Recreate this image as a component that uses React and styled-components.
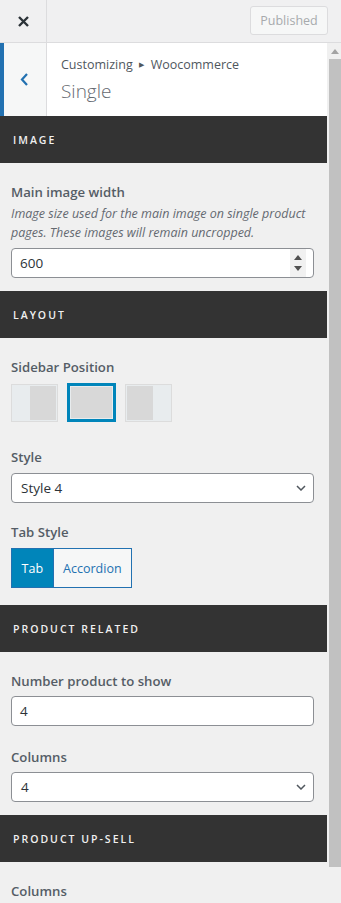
import React from "react";
import styled, { createGlobalStyle } from "styled-components";

const Global = createGlobalStyle`
  html, body {
    margin: 0;
    padding: 0;
    background: #f0f0f1;
  }
  body {
    font-family: "Open Sans", "Noto Sans", sans-serif;
    color: #50575e;
  }
  * {
    box-sizing: border-box;
  }
`;

const Frame = styled.div`
  width: 341px;
  height: 903px;
  display: flex;
  flex-direction: column;
  overflow: hidden;
`;

const TopBar = styled.div`
  height: 43px;
  flex: none;
  display: flex;
  align-items: center;
  border-bottom: 1px solid #dcdcde;
  background: #f0f0f1;
  padding-right: 13px;
`;

const CloseButton = styled.div`
  width: 47px;
  height: 100%;
  display: flex;
  align-items: center;
  justify-content: center;
  border-right: 1px solid #dcdcde;
`;

const Spacer = styled.div`
  flex: 1;
`;

const PublishButton = styled.div`
  width: 78px;
  height: 29px;
  display: flex;
  align-items: center;
  justify-content: center;
  font-size: 12.5px;
  color: #a7aaad;
  background: #f6f7f7;
  border: 1px solid #dcdcde;
  border-radius: 3px;
  margin-bottom: 1px;
`;

const Main = styled.div`
  flex: 1;
  display: flex;
  min-height: 0;
`;

const Panel = styled.div`
  width: 327px;
  flex: none;
  display: flex;
  flex-direction: column;
  background: #f0f0f0;
  overflow: hidden;

  & > * {
    flex-shrink: 0;
  }
`;

const PanelHeader = styled.div`
  height: 73px;
  display: flex;
  background: #fff;
`;

const BackButton = styled.div`
  width: 47px;
  flex: none;
  display: flex;
  align-items: center;
  justify-content: center;
  background: #f6f7f7;
  border-left: 4px solid #2271b1;
  border-right: 1px solid #dcdcde;
  padding-right: 2px;
`;

const TitleBlock = styled.div`
  padding: 12px 0 0 14px;
`;

const Crumbs = styled.div`
  font-size: 12.5px;
  line-height: 20px;
  color: #50575e;
`;

const Arrow = styled.span`
  font-size: 7px;
  margin: 0 7px 0 6px;
  position: relative;
  top: -2px;
`;

const Title = styled.div`
  font-size: 19px;
  font-weight: 300;
  line-height: 28px;
  color: #646970;
`;

const SectionTitle = styled.div`
  height: 47px;
  display: flex;
  align-items: center;
  padding-left: 13px;
  background: #333;
  color: #f0f0f0;
  font-size: 10.5px;
  font-weight: 600;
  letter-spacing: 2px;
`;

const SectionBody = styled.div`
  padding: 19px 12px ${(p) => p.$bottom || 13}px 11px;
  display: flex;
  flex-direction: column;
  gap: ${(p) => p.$gap || 19}px;
`;

const Control = styled.div`
  display: flex;
  flex-direction: column;
`;

const Label = styled.div`
  font-size: 13.2px;
  font-weight: 600;
  line-height: 20px;
  color: #555d66;
  margin-bottom: ${(p) => p.$gap ?? 5}px;
`;

const Description = styled.div`
  font-size: 12.5px;
  font-style: italic;
  line-height: 18.5px;
  color: #646970;
  margin: 3px 0 6px;
`;

const Field = styled.div`
  height: 30px;
  width: 303px;
  display: flex;
  align-items: center;
  background: #fff;
  border: 1px solid #8c8f94;
  border-radius: 4px;
  padding: 0 7px 0 ${(p) => (p.$select ? 9 : 8)}px;
  font-size: 13.5px;
  color: #2c3338;
`;

const Value = styled.div`
  flex: 1;
`;

const Spinner = styled.div`
  width: 16px;
  height: 28px;
  display: flex;
  flex-direction: column;
  align-items: center;
  justify-content: center;
  gap: 6px;
  background: #f1f1f1;
`;

const Options = styled.div`
  display: flex;
  gap: 9px;
  align-items: center;
  margin-bottom: 6px;
`;

const Option = styled.div`
  width: ${(p) => (p.$active ? 49 : 47)}px;
  height: ${(p) => (p.$active ? 39 : 38)}px;
  display: flex;
  flex-direction: ${(p) => (p.$side === "right" ? "row-reverse" : "row")};
  border: ${(p) => (p.$active ? "3px solid #0085ba" : "1px solid #dcdcdc")};
  background: #e8ecee;
  padding: 1px;
  gap: 1px;
`;

const Strip = styled.div`
  width: 16px;
  background: #e8ecee;
`;

const Block = styled.div`
  flex: 1;
  background: #d8d8d8;
`;

const Tabs = styled.div`
  display: flex;
  width: 121px;
  height: 40px;
  border: 1px solid #2271b1;
`;

const TabButton = styled.div`
  display: flex;
  align-items: center;
  justify-content: center;
  width: ${(p) => p.$w}px;
  font-size: 12.5px;
  background: ${(p) => (p.$active ? "#0085ba" : "#f6f7f7")};
  color: ${(p) => (p.$active ? "#fff" : "#2271b1")};
  border-left: ${(p) => (p.$active ? "none" : "1px solid #2271b1")};
`;

const ScrollBar = styled.div`
  flex: 1;
  display: flex;
  flex-direction: column;
  align-items: flex-end;
  background: #f0f0f0;
`;

const ScrollArrow = styled.div`
  width: 12px;
  height: 16px;
  display: flex;
  align-items: center;
  justify-content: center;
`;

const ScrollThumb = styled.div`
  width: 12px;
  height: 808px;
  background: #c1c1c1;
`;

const Chevron = () => (
  <svg width="10" height="6" viewBox="0 0 10 6">
    <path d="M1 1l4 4 4-4" fill="none" stroke="#50575e" strokeWidth="1.5" />
  </svg>
);

const Caret = ({ down }) => (
  <svg width="8" height="5" viewBox="0 0 8 5">
    <path d={down ? "M0 0h8L4 5z" : "M0 5h8L4 0z"} fill="#505050" />
  </svg>
);

const NumberField = ({ value, spinner }) => (
  <Field>
    <Value>{value}</Value>
    {spinner && (
      <Spinner>
        <Caret />
        <Caret down />
      </Spinner>
    )}
  </Field>
);

const SelectField = ({ value }) => (
  <Field $select>
    <Value>{value}</Value>
    <Chevron />
  </Field>
);

const App = () => {
  return (
    <>
      <Global />
      <Frame>
        <TopBar>
          <CloseButton>
            <svg width="11" height="11" viewBox="0 0 11 11">
              <path d="M1 1l9 9M10 1l-9 9" stroke="#2c3338" strokeWidth="2.4" />
            </svg>
          </CloseButton>
          <Spacer />
          <PublishButton>Published</PublishButton>
        </TopBar>
        <Main>
          <Panel>
            <PanelHeader>
              <BackButton>
                <svg width="9" height="13" viewBox="0 0 9 13">
                  <path d="M7 1L2 6.5 7 12" fill="none" stroke="#2271b1" strokeWidth="2.2" />
                </svg>
              </BackButton>
              <TitleBlock>
                <Crumbs>
                  Customizing<Arrow>▶</Arrow>Woocommerce
                </Crumbs>
                <Title>Single</Title>
              </TitleBlock>
            </PanelHeader>

            <SectionTitle>IMAGE</SectionTitle>
            <SectionBody>
              <Control>
                <Label $gap={0}>Main image width</Label>
                <Description>
                  Image size used for the main image on single product pages. These images will
                  remain uncropped.
                </Description>
                <NumberField value="600" spinner />
              </Control>
            </SectionBody>

            <SectionTitle>LAYOUT</SectionTitle>
            <SectionBody $bottom={17}>
              <Control>
                <Label $gap={6}>Sidebar Position</Label>
                <Options>
                  <Option $side="left">
                    <Strip />
                    <Block />
                  </Option>
                  <Option $active>
                    <Block />
                  </Option>
                  <Option $side="right">
                    <Strip />
                    <Block />
                  </Option>
                </Options>
              </Control>
              <Control>
                <Label $gap={6}>Style</Label>
                <SelectField value="Style 4" />
              </Control>
              <Control>
                <Label $gap={6}>Tab Style</Label>
                <Tabs>
                  <TabButton $active $w={41}>
                    Tab
                  </TabButton>
                  <TabButton $w={79}>Accordion</TabButton>
                </Tabs>
              </Control>
            </SectionBody>

            <SectionTitle>PRODUCT RELATED</SectionTitle>
            <SectionBody $gap={21} $bottom={13}>
              <Control>
                <Label>Number product to show</Label>
                <NumberField value="4" />
              </Control>
              <Control>
                <Label>Columns</Label>
                <SelectField value="4" />
              </Control>
            </SectionBody>

            <SectionTitle>PRODUCT UP-SELL</SectionTitle>
            <SectionBody $bottom={13}>
              <Control>
                <Label>Columns</Label>
              </Control>
            </SectionBody>
          </Panel>
          <ScrollBar>
            <ScrollArrow>
              <svg width="8" height="5" viewBox="0 0 8 5">
                <path d="M0 5h8L4 0z" fill="#a3a3a3" />
              </svg>
            </ScrollArrow>
            <ScrollThumb />
          </ScrollBar>
        </Main>
      </Frame>
    </>
  );
};

export default App;
